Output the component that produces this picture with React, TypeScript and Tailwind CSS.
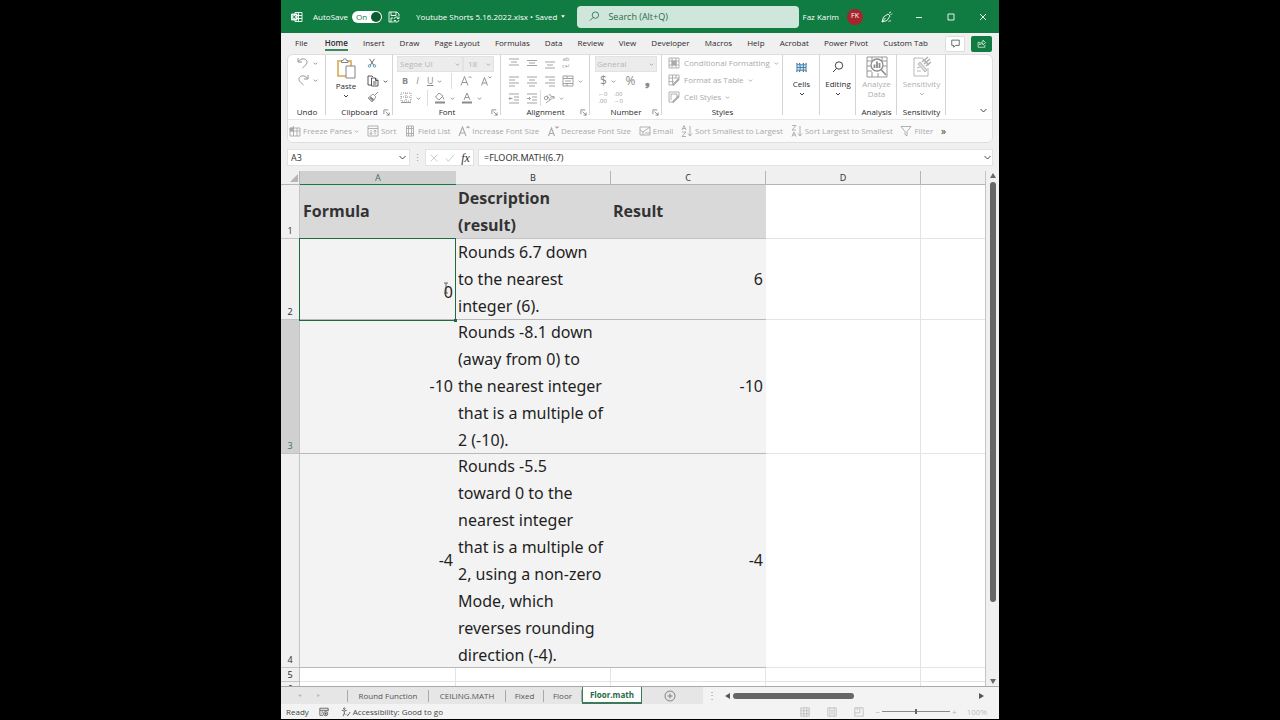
// src/App.tsx
import type { ReactNode } from "react";

const menuTabs = [
  "Home",
  "Insert",
  "Draw",
  "Page Layout",
  "Formulas",
  "Data",
  "Review",
  "View",
  "Developer",
  "Macros",
  "Help",
  "Acrobat",
  "Power Pivot",
  "Custom Tab",
];

// The line breaks are the ones the column width gives in the sheet
const rows = [
  {
    id: 2,
    height: "h-[80px]",
    a: "0",
    b: "Rounds 6.7 down\nto the nearest\ninteger (6).",
    c: "6",
  },
  {
    id: 3,
    height: "h-[133px]",
    a: "-10",
    b: "Rounds -8.1 down\n(away from 0) to\nthe nearest integer\nthat is a multiple of\n2 (-10).",
    c: "-10",
  },
  {
    id: 4,
    height: "h-[213px]",
    a: "-4",
    b: "Rounds -5.5\ntoward 0 to the\nnearest integer\nthat is a multiple of\n2, using a non-zero\nMode, which\nreverses rounding\ndirection (-4).",
    c: "-4",
  },
];

const sheets = [
  { name: "Round Function", width: "w-[81px]" },
  { name: "CEILING.MATH", width: "w-[77px]" },
  { name: "Fixed", width: "w-[38px]" },
  { name: "Floor", width: "w-[38px]" },
];

type IconProps = { children: ReactNode; className?: string; box?: string };

function Icon({ children, className = "size-3", box = "0 0 12 12" }: IconProps) {
  return (
    <svg
      viewBox={box}
      className={`shrink-0 ${className}`}
      fill="none"
      stroke="currentColor"
      strokeWidth="0.9"
      aria-hidden="true"
    >
      {children}
    </svg>
  );
}

function Chevron({ className = "size-[5px]" }: { className?: string }) {
  return (
    <Icon box="0 0 6 6" className={className}>
      <path d="M1 2l2 2 2-2" vectorEffect="non-scaling-stroke" />
    </Icon>
  );
}

function Lines({ rows }: { rows: string }) {
  return (
    <Icon>
      <path d={rows} />
    </Icon>
  );
}

function Tool({
  label,
  children,
  className = "",
}: {
  label: string;
  children: ReactNode;
  className?: string;
}) {
  return (
    <button
      type="button"
      aria-label={label}
      className={`flex h-4 items-center justify-center gap-1 ${className}`}
    >
      {children}
    </button>
  );
}

function Group({
  label,
  width,
  launcher = false,
  children,
}: {
  label: string;
  width: string;
  launcher?: boolean;
  children: ReactNode;
}) {
  return (
    <section
      aria-label={label}
      className={`relative flex shrink-0 flex-col ${width} after:absolute after:top-0 after:right-0 after:h-[60px] after:w-px after:bg-[#d4d4d4]`}
    >
      <div className="flex h-[52px] flex-col text-[#a9a9a9]">{children}</div>
      <p className="text-center leading-[10px] text-[#2b2b2b]">{label}</p>
      {launcher && (
        <button
          type="button"
          aria-label={`${label} settings`}
          className="absolute right-[3px] bottom-[1px] text-[#777]"
        >
          <Icon box="0 0 8 8" className="size-[7px]">
            <path d="M1 6V1h5M3 3l4 4M7 4v3H4" />
          </Icon>
        </button>
      )}
    </section>
  );
}

function BigTool({
  label,
  icon,
  muted = false,
  arrow = true,
}: {
  label: string;
  icon: ReactNode;
  muted?: boolean;
  arrow?: boolean;
}) {
  return (
    <button
      type="button"
      className={`flex flex-col items-center leading-[10px] ${muted ? "text-[#b0b0b0]" : "text-[#2b2b2b]"}`}
    >
      <span className="flex h-6 items-center">{icon}</span>
      <span>{label}</span>
      {arrow && <Chevron className="mt-[2px] size-[6px]" />}
    </button>
  );
}

function QuickTool({ label, children }: { label: string; children: ReactNode }) {
  return (
    <button type="button" className="flex items-center gap-[2px] whitespace-nowrap">
      {children}
      {label}
    </button>
  );
}

function TitleBar() {
  return (
    <header className="flex h-[33px] shrink-0 items-center bg-[#107c41] text-[8px] text-white">
      <Icon className="ml-[10px] size-3">
        <path d="M4 1.5h7v9H4zM7.5 1.5v9M4 4.5h7M4 7.5h7" />
        <path d="M0.5 3h5.500v6h-5.500z" fill="#dff0e6" />
        <path d="M2 4.500l2.500 3M4.500 4.500L2 7.500" stroke="#107c41" />
      </Icon>
      <label htmlFor="autosave" className="ml-[10px]">
        AutoSave
      </label>
      <span className="relative ml-1 flex h-3 w-[30px] shrink-0 items-center rounded-full bg-white text-[#107c41]">
        <input
          id="autosave"
          type="checkbox"
          defaultChecked
          className="absolute inset-0 appearance-none"
        />
        <span className="ml-1">On</span>
        <span className="mr-[1px] ml-auto size-[10px] rounded-full bg-[#0d5c31]" />
      </span>
      <Icon className="ml-[6px] size-3">
        <path d="M5 11H1V1h8l2 2v2M3 1v3.500h5V1M3 11V7h2" />
        <path d="M6 8a2.500 2.500 0 0 1 4.500-1M11 5.500V7.500H9M11 9a2.500 2.500 0 0 1-4.500 1M6 11.500V9.500h2" />
      </Icon>
      <button type="button" className="ml-4 flex items-center gap-1 whitespace-nowrap">
        Youtube Shorts 5.16.2022.xlsx • Saved
        <svg viewBox="0 0 6 4" className="h-[3px] w-1" aria-hidden="true">
          <path d="M0 0h6L3 4z" fill="currentColor" />
        </svg>
      </button>
      <label className="ml-3 flex h-[22px] w-[222px] shrink-0 items-center rounded-sm bg-[#cfe7da] pl-3 text-[9px] text-[#2d6a4a]">
        <Icon className="size-[11px]">
          <circle cx="7" cy="4.500" r="3.500" />
          <path d="M4.500 7L1 10.500" />
        </Icon>
        <input
          aria-label="Search"
          placeholder="Search (Alt+Q)"
          className="ml-2 w-full bg-transparent placeholder:text-[#2d6a4a]"
        />
      </label>
      <span className="ml-auto whitespace-nowrap">Faz Karim</span>
      <span className="ml-2 flex size-4 shrink-0 items-center justify-center rounded-full bg-[#a4262c] text-[7px]">
        FK
      </span>
      <button type="button" aria-label="Pen" className="ml-[18px]">
        <Icon>
          <path d="M1 11l1.500-5L7 3l2 2-3 4.500zM1 11l3.500-4M8 2l2-1M9.500 4L11 2.500M7.500 10.500c1-1 1.500 0 2.500-1" />
        </Icon>
      </button>
      <button type="button" aria-label="Minimize" className="ml-[22px]">
        <Icon className="size-2" box="0 0 8 8">
          <path d="M1 4.500h6" />
        </Icon>
      </button>
      <button type="button" aria-label="Maximize" className="ml-6">
        <Icon className="size-2" box="0 0 8 8">
          <path d="M1 1h6v6H1z" />
        </Icon>
      </button>
      <button type="button" aria-label="Close" className="mr-3 ml-6">
        <Icon className="size-2" box="0 0 8 8">
          <path d="M1 1l6 6M7 1L1 7" />
        </Icon>
      </button>
    </header>
  );
}

function MenuBar() {
  return (
    <nav className="flex h-[21px] shrink-0 items-center pr-[7px] pl-[14px] text-[8px] text-[#2b2b2b]">
      <a href="#file" className="border-b-2 border-transparent">
        File
      </a>
      <div className="ml-[17px] flex flex-1 justify-between">
        {menuTabs.map((tab) => (
          <a
            key={tab}
            href={`#${tab}`}
            className={
              tab === "Home"
                ? "border-b-2 border-[#3d8561] font-semibold whitespace-nowrap"
                : "border-b-2 border-transparent whitespace-nowrap"
            }
          >
            {tab}
          </a>
        ))}
      </div>
      <button
        type="button"
        aria-label="Comments"
        className="ml-[17px] flex h-4 w-5 items-center justify-center rounded-xs border border-[#ddd] bg-white"
      >
        <Icon className="size-[9px]">
          <path d="M1 1.500h10v7H6L3.500 11V8.500H1z" />
        </Icon>
      </button>
      <button
        type="button"
        aria-label="Share"
        className="ml-[6px] flex h-4 w-[21px] items-center justify-center rounded-xs bg-[#107c41] text-white"
      >
        <Icon className="size-[9px]">
          <path d="M4 4.500H1.500V11h9V8M3.500 8c.5-3 2-4 4.500-4V1.500L11.500 5 8 8V6C6 6 4.500 6.500 3.500 8z" />
        </Icon>
      </button>
    </nav>
  );
}

function Ribbon() {
  return (
    <div className="mr-[6px] ml-[6px] shrink-0 overflow-hidden rounded-md border border-[#dedede] bg-white text-[8px]">
      <div className="flex h-[64px] items-start">
        <Group label="Undo" width="w-[38px]">
          <Tool label="Undo" className="text-[#888]">
            <Icon>
              <path d="M1 1v4h4M1.500 4.500C4 1 9 1 10 4.500 10.500 7 8 8.500 5.500 11" />
            </Icon>
            <Chevron />
          </Tool>
          <Tool label="Redo" className="mt-[1px] text-[#888]">
            <Icon>
              <path d="M11 1v4H7M10.500 4.500C8 1 3 1 2 4.500 1.500 7 4 8.500 6.500 11" />
            </Icon>
            <Chevron />
          </Tool>
        </Group>

        <Group label="Clipboard" width="w-[67px]" launcher>
          <div className="flex">
            <button
              type="button"
              className="flex w-10 flex-col items-center leading-[10px] text-[#2b2b2b]"
            >
              <Icon box="0 0 20 22" className="mt-[2px] h-[22px] w-5">
                <path d="M2 4h13v15H2z" stroke="#d9a84e" strokeWidth="1.600" />
                <path
                  d="M5.500 5.500V3.500h1.500a1.600 1.600 0 0 1 3.500 0H12v2z"
                  fill="#fff"
                  stroke="#777"
                />
                <path d="M10 9h9v12h-9z" fill="#fff" stroke="#777" />
              </Icon>
              <span className="mt-[2px]">Paste</span>
              <Chevron className="mt-[2px] size-[6px]" />
            </button>
            <div className="flex flex-col items-start pl-[1px] text-[#444]">
              <Tool label="Cut">
                <Icon className="size-[10px]">
                  <path d="M3 1l5 7.500M9 1L4 8.500" />
                  <circle cx="3" cy="9.500" r="1.500" stroke="#2f7f9f" />
                  <circle cx="9" cy="9.500" r="1.500" stroke="#2f7f9f" />
                </Icon>
              </Tool>
              <Tool label="Copy" className="mt-[2px]">
                <Icon>
                  <path d="M4 10H1V1h4l1 1M4.500 3h4L11 5.500V11H4.500zM8.500 3v2.500H11M6 7h3.500M6 9h3.500" />
                </Icon>
                <Chevron />
              </Tool>
              <Tool label="Format Painter" className="text-[#8c8c8c]">
                <Icon>
                  <path d="M11 1L8 4M6 3l3 3-4 5-4-4zM3 5.500L7.500 9" />
                  <path d="M2.500 7l3 3 1-1.500L4 6z" fill="currentColor" />
                </Icon>
              </Tool>
            </div>
          </div>
        </Group>

        <Group label="Font" width="w-[108px]" launcher>
          <div className="mx-1 mt-[1px] flex h-4">
            <label className="relative flex w-[66px] items-center border border-[#e2e2e2] bg-[#ececec]">
              <select
                aria-label="Font name"
                className="w-full appearance-none pl-[2px] text-[#b5b5b5]"
              >
                <option>Segoe UI</option>
              </select>
              <span className="absolute right-[2px]">
                <Chevron />
              </span>
            </label>
            <label className="relative flex w-[31px] items-center border border-[#e2e2e2] bg-[#ececec]">
              <select
                aria-label="Font size"
                className="w-full appearance-none pl-1 text-[#b5b5b5]"
              >
                <option>18</option>
              </select>
              <span className="absolute right-[2px]">
                <Chevron />
              </span>
            </label>
          </div>
          <div className="mt-[1px] flex items-center justify-between px-[9px] text-[9px] text-[#8a8a8a]">
            <Tool label="Bold" className="font-bold">
              B
            </Tool>
            <Tool label="Italic" className="italic">
              I
            </Tool>
            <Tool label="Underline">
              <span className="underline">U</span>
              <Chevron />
            </Tool>
            <span className="h-4 w-px bg-[#ddd]" />
            <Tool label="Increase font size">
              <Icon>
                <path d="M1 10.500l3.500-9L8 10.500M2.200 7.500h4.600M8.500 3L10 1.500 11.500 3" />
              </Icon>
            </Tool>
            <Tool label="Decrease font size">
              <Icon>
                <path d="M1.500 10.500l3-8 3 8M2.500 8h4M8.500 1.500L10 3l1.500-1.500" />
              </Icon>
            </Tool>
          </div>
          <div className="mt-[1px] flex items-center gap-[6px] pl-[7px] text-[#8a8a8a]">
            <Tool label="Borders">
              <Icon>
                <path d="M1 10.500h10" />
                <path d="M1 1h10v8H1zM6 1v8M1 5h10" strokeDasharray="1 1" />
              </Icon>
              <Chevron />
            </Tool>
            <span className="h-4 w-px bg-[#ddd]" />
            <Tool label="Fill color">
              <Icon>
                <path d="M5 1L1.500 5 5 8l4-4zM9 5l1 2.500" />
                <path d="M1 10.500h10" strokeWidth="2" />
              </Icon>
              <Chevron />
            </Tool>
            <Tool label="Font color">
              <Icon>
                <path d="M3 8l3-7 3 7M4 5.500h4" />
                <path d="M1 10.500h10" strokeWidth="2" />
              </Icon>
              <Chevron />
            </Tool>
          </div>
        </Group>

        <Group label="Alignment" width="w-[89px]" launcher>
          <div className="flex gap-[6px] pl-[7px] text-[#999]">
            <Tool label="Top align">
              <Lines rows="M1 2h10M3 5h6M1 8h10" />
            </Tool>
            <Tool label="Middle align">
              <Lines rows="M1 3.500h10M3 6h6M1 8.500h10" />
            </Tool>
            <Tool label="Bottom align">
              <Lines rows="M1 5h10M3 8h6M1 11h10" />
            </Tool>
            <Tool label="Wrap text">
              <span className="text-[6px] leading-[7px]">
                ab
                <br />
                c↵
              </span>
            </Tool>
          </div>
          <div className="mt-[2px] flex gap-[6px] pl-[7px] text-[#999]">
            <Tool label="Align left">
              <Lines rows="M1 2h10M1 5h6M1 8h10M1 11h6" />
            </Tool>
            <Tool label="Center">
              <Lines rows="M1 2h10M3 5h6M1 8h10M3 11h6" />
            </Tool>
            <Tool label="Align right">
              <Lines rows="M1 2h10M5 5h6M1 8h10M5 11h6" />
            </Tool>
            <Tool label="Merge and center">
              <Icon>
                <path d="M1 1h10v10H1zM1 3.500h10M1 8.500h10M5 1v2.500M5 8.500V11M3 6h6" />
              </Icon>
              <Chevron />
            </Tool>
          </div>
          <div className="mt-[1px] flex gap-[6px] pl-[7px] text-[#999]">
            <Tool label="Decrease indent">
              <Lines rows="M1 2h10M6 5h5M6 8h5M1 11h10M4.500 6.500H1M2.500 5L1 6.500 2.500 8" />
            </Tool>
            <Tool label="Increase indent">
              <Lines rows="M1 2h10M6 5h5M6 8h5M1 11h10M1 6.500h3.500M3 5l1.500 1.500L3 8" />
            </Tool>
            <span className="-mx-1 h-4 w-px bg-[#ddd]" />
            <Tool label="Orientation">
              <Icon>
                <circle cx="3" cy="6" r="1.700" />
                <path d="M4 3.500L7 8M5.500 3a1.800 1.800 0 0 1 2 3M3 11l8-6M8.500 4.500H11V7" />
              </Icon>
              <Chevron />
            </Tool>
          </div>
        </Group>

        <Group label="Number" width="w-[72px]" launcher>
          <label className="relative mx-[5px] mt-[1px] flex h-4 items-center border border-[#e2e2e2] bg-[#ececec]">
            <select
              aria-label="Number format"
              className="w-full appearance-none pl-[1px] text-[#b5b5b5]"
            >
              <option>General</option>
            </select>
            <span className="absolute right-[2px]">
              <Chevron />
            </span>
          </label>
          <div className="mt-[1px] flex justify-between pr-3 pl-[10px] text-xs text-[#8a8a8a]">
            <Tool label="Currency">
              $<Chevron />
            </Tool>
            <Tool label="Percent">%</Tool>
            <Tool label="Comma" className="font-bold">
              ❟
            </Tool>
          </div>
          <div className="mt-[1px] flex gap-[6px] pl-2 text-[6px] leading-[7px] text-[#999]">
            <Tool label="Increase decimal">
              <span>
                ←0
                <br />
                .00
              </span>
            </Tool>
            <Tool label="Decrease decimal">
              <span>
                .00
                <br />
                →0
              </span>
            </Tool>
          </div>
        </Group>

        <Group label="Styles" width="w-[121px]">
          <div className="flex flex-col items-start gap-[1px] pl-[6px] whitespace-nowrap">
            <Tool label="Conditional Formatting">
              <Icon>
                <path d="M1 1h10v10H1zM1 4h10M1 8h10M4 1v10M8 1v10" />
                <path d="M4 4h4v4H4z" fill="currentColor" />
              </Icon>
              Conditional Formatting
              <Chevron />
            </Tool>
            <Tool label="Format as Table">
              <Icon>
                <path d="M11 5V1H1v10h3M1 4h10M1 7.500h5M4.500 1v9M8 1v3" />
                <path d="M11 5L6 10l-1.500 1.500" strokeWidth="2" />
              </Icon>
              Format as Table
              <Chevron />
            </Tool>
            <Tool label="Cell Styles">
              <Icon>
                <path d="M11 5V1H1v10h3M3 3h6v3M3 3v6" />
                <path d="M11 5L6 10l-1.500 1.500" strokeWidth="2" />
              </Icon>
              Cell Styles
              <Chevron />
            </Tool>
          </div>
        </Group>

        <Group label="" width="w-[37px]">
          <BigTool
            label="Cells"
            icon={
              <Icon className="size-[11px]">
                <path d="M1 1v2M4 1v2M8 1v2M11 1v2M1 9v2M4 9v2M8 9v2M11 9v2" />
                <path d="M1 3h10v6H1zM1 6h10M4.500 3v6M8 3v6" stroke="#2e75a8" fill="#cfe3f2" />
              </Icon>
            }
          />
        </Group>
        <Group label="" width="w-[36px]">
          <BigTool
            label="Editing"
            icon={
              <Icon>
                <circle cx="7" cy="4.500" r="3.700" />
                <path d="M4.500 7.500L1 11" />
              </Icon>
            }
          />
        </Group>
        <Group label="Analysis" width="w-[41px]">
          <BigTool
            muted
            arrow={false}
            label="Analyze Data"
            icon={
              <Icon box="0 0 22 22" className="size-[22px] text-[#8c8c8c]">
                <path d="M1 1h20v20H1zM1 5h5M1 10h4M1 15h5M16 5h5M17 10h4M6 1v4M16 1v4M6 16v5M12 17v4" />
                <circle cx="11" cy="9" r="6" fill="#fff" strokeWidth="1.300" />
                <path d="M15 13.500l5 5.500" strokeWidth="1.600" />
                <path d="M8.500 12V8.500M11 12V5.500M13.500 12V7" strokeWidth="1.800" />
              </Icon>
            }
          />
        </Group>
        <Group label="Sensitivity" width="w-[49px]">
          <BigTool
            muted
            label="Sensitivity"
            icon={
              <Icon box="0 0 22 22" className="size-[22px]">
                <path d="M12 2H3v18h14V12" />
                <path d="M7 8l7 8 2-2-7-8zM6 12l3-1M6 15h4" fill="#ddd" />
                <path d="M11 6l6-5M13 8l6-5M15 10l5-4M12 3l6 6" strokeWidth="1.600" />
              </Icon>
            }
          />
        </Group>
        <button
          type="button"
          aria-label="Collapse ribbon"
          className="mt-auto mr-1 mb-1 ml-auto text-[#333]"
        >
          <Chevron className="size-[9px]" />
        </button>
      </div>

      <div className="flex h-[23px] items-center justify-between border-t border-[#e6e6e6] bg-[#fafafa] pr-[46px] pl-[1px] text-[#a9a9a9]">
        <button type="button" className="flex items-center gap-[2px] whitespace-nowrap">
          <Icon>
            <path d="M1 3h10v8H1zM1 6h10M4.500 1v10M8 3v8" />
            <path d="M1 3h3.500v3H1z" fill="currentColor" />
          </Icon>
          Freeze Panes
          <Chevron />
        </button>
        <QuickTool label="Sort">
          <Icon>
            <path d="M1 1h10v10H1zM1 3.500h10M4 5v4.500M2.500 8L4 9.500 5.500 8M8 9.500V5M6.500 6.500L8 5l1.500 1.500" />
          </Icon>
        </QuickTool>
        <QuickTool label="Field List">
          <Icon>
            <path d="M2.500 1h7v10h-7zM4.500 1v10M7.500 1v10M2.500 3.500h7M2.500 8.500h7" />
          </Icon>
        </QuickTool>
        <QuickTool label="Increase Font Size">
          <Icon>
            <path d="M1 11l3.500-9L8 11M2.200 8h4.600M8.500 3L10 1.500 11.500 3" strokeWidth="1.100" />
          </Icon>
        </QuickTool>
        <QuickTool label="Decrease Font Size">
          <Icon>
            <path d="M1.500 11l3-8 3 8M2.500 8.500h4M8.500 1.500L10 3l1.500-1.500" strokeWidth="1.100" />
          </Icon>
        </QuickTool>
        <QuickTool label="Email">
          <Icon>
            <path d="M1 2h10v8H1zM1 5l3 2 7-5M4 7v3M6 8h5" />
          </Icon>
        </QuickTool>
        <QuickTool label="Sort Smallest to Largest">
          <Icon>
            <path d="M1 5l2-4.500L5 5M1.500 3.500h3M1 7h4l-4 4.500h4M9 1v10M7 8.500L9 11l2-2.500" />
          </Icon>
        </QuickTool>
        <QuickTool label="Sort Largest to Smallest">
          <Icon>
            <path d="M1 .5h4L1 5h4M1 11.500L3 7l2 4.500M1.500 10h3M9 1v10M7 8.500L9 11l2-2.500" />
          </Icon>
        </QuickTool>
        <QuickTool label="Filter">
          <Icon>
            <path d="M1 1.500h10L7 6.500V11L5 9.500v-3z" />
          </Icon>
        </QuickTool>
        <button type="button" aria-label="More commands" className="text-[10px] text-[#333]">
          »
        </button>
      </div>
    </div>
  );
}

function FormulaBar() {
  return (
    <div className="mx-[6px] mt-[6px] flex h-[17px] shrink-0 items-center text-[9px] text-[#333]">
      <div className="flex h-full w-[123px] items-center border border-[#e2e2e2] bg-white pr-[2px]">
        <input
          aria-label="Name box"
          defaultValue="A3"
          className="min-w-0 flex-1 bg-transparent pl-[3px]"
        />
        <button type="button" aria-label="Open name list">
          <Chevron className="size-[9px]" />
        </button>
      </div>
      <span className="w-[15px] text-center text-[#999]">⋮</span>
      <div className="flex h-full w-[49px] items-center justify-around border border-[#e2e2e2] bg-white">
        <button type="button" aria-label="Cancel" className="text-[#bbb]">
          <Icon className="size-[10px]">
            <path d="M2 2l8 8M10 2l-8 8" />
          </Icon>
        </button>
        <button type="button" aria-label="Enter" className="text-[#bbb]">
          <Icon className="size-[10px]">
            <path d="M1 6.500L4 10l7-8" />
          </Icon>
        </button>
        <button
          type="button"
          aria-label="Insert function"
          className="font-['Liberation_Serif',serif] text-xs leading-none italic"
        >
          fx
        </button>
      </div>
      <div className="ml-1 flex h-full flex-1 items-center border border-[#e2e2e2] bg-white">
        <input
          aria-label="Formula"
          defaultValue="=FLOOR.MATH(6.7)"
          className="min-w-0 flex-1 bg-transparent pl-[5px] font-['Noto_Sans',sans-serif]"
        />
        <button type="button" aria-label="Expand formula bar">
          <Chevron className="size-[9px]" />
        </button>
      </div>
    </div>
  );
}

function Grid() {
  return (
    <div className="mt-[5px] flex min-h-0 flex-1">
      <div className="min-w-0 flex-1 overflow-hidden border-r border-[#c4c4c4]">
        <table className="w-full table-fixed border-separate border-spacing-0 bg-white font-['Noto_Sans',sans-serif] text-base leading-[27px] text-[#1f1f1f]">
          <colgroup>
            <col className="w-[19px]" />
            <col className="w-[156px]" />
            <col className="w-[155px]" />
            <col className="w-[155px]" />
            <col className="w-[155px]" />
            <col />
          </colgroup>
          <thead>
            <tr className="h-[14px] bg-[#f0f0f0] text-[9px] leading-[13px] text-[#333]">
              <th aria-label="Select all" className="border-r border-b border-[#b5b5b5] p-0">
                <svg viewBox="0 0 8 8" className="mr-[1px] ml-auto size-2" aria-hidden="true">
                  <path d="M8 0v8H0z" fill="#b5b5b5" />
                </svg>
              </th>
              <th className="border-b border-[#107c41] bg-[#d0d0d0] p-0 font-normal text-[#3d7a5a]">
                A
              </th>
              <th className="border-r border-b border-[#b5b5b5] p-0 font-normal">B</th>
              <th className="border-r border-b border-[#b5b5b5] p-0 font-normal">C</th>
              <th className="border-r border-b border-[#b5b5b5] p-0 font-normal">D</th>
              <th className="border-b border-[#b5b5b5] p-0" />
            </tr>
          </thead>
          <tbody>
            <tr className="bg-[#d9d9d9] text-left font-['Open_Sans',sans-serif] text-[#333]">
              <th className="border-r border-b border-[#c4c4c4] bg-[#f0f0f0] p-0 text-center align-bottom text-[9px] leading-[14px] font-normal">
                1
              </th>
              <td className="border-b border-[#c4c4c4] p-0 pl-[3px] font-bold">Formula</td>
              <td className="border-b border-[#c4c4c4] p-0 pl-[2px] font-bold">
                <div className="flex h-[53px] items-center">Description (result)</div>
              </td>
              <td className="border-b border-[#c4c4c4] p-0 pl-[2px] font-bold">Result</td>
              <td className="border-r border-b border-[#e4e4e4] bg-white" />
              <td className="border-b border-[#e4e4e4] bg-white" />
            </tr>
            {rows.map((row) => (
              <tr key={row.id} className="bg-[#f3f3f3]">
                <th
                  className={`border-r border-b border-[#c4c4c4] p-0 text-center align-bottom text-[9px] leading-[14px] font-normal ${
                    row.id === 3 ? "bg-[#d0d0d0] text-[#3d7a5a]" : "bg-[#f0f0f0] text-[#333]"
                  }`}
                >
                  {row.id}
                </th>
                <td
                  className={`relative border-b border-[#b9b9b9] p-0 pr-[3px] text-right ${row.id === 2 ? "pt-[27px]" : ""}`}
                >
                  {row.a}
                  {row.id === 2 && (
                    <>
                      <span className="absolute -top-px right-0 -bottom-[2px] -left-px z-10 border border-[#1e6b41]" />
                      <span className="absolute -right-px -bottom-[3px] z-10 size-[3px] bg-[#1e6b41]" />
                      <Icon
                        box="0 0 6 12"
                        className="absolute right-[7px] bottom-[25px] h-3 w-[6px] text-[#555]"
                      >
                        <path d="M1 1h4M3 1v10M1 11h4" />
                      </Icon>
                    </>
                  )}
                </td>
                <td className="border-b border-[#b9b9b9] p-0 pl-[2px]">
                  <div className={`flex items-center whitespace-pre ${row.height}`}>{row.b}</div>
                </td>
                <td className="border-b border-[#b9b9b9] p-0 pr-[3px] text-right">{row.c}</td>
                <td className="border-r border-b border-[#e4e4e4] bg-white" />
                <td className="border-b border-[#e4e4e4] bg-white" />
              </tr>
            ))}
            {[5, 6].map((id) => (
              <tr key={id} className="h-[14px]">
                <th className="border-r border-b border-[#c4c4c4] bg-[#f0f0f0] p-0 text-[9px] leading-[13px] font-normal text-[#333]">
                  {id}
                </th>
                <td className="border-r border-b border-[#e4e4e4] p-0" />
                <td className="border-r border-b border-[#e4e4e4] p-0" />
                <td className="border-r border-b border-[#e4e4e4] p-0" />
                <td className="border-r border-b border-[#e4e4e4] p-0" />
                <td className="border-b border-[#e4e4e4] p-0" />
              </tr>
            ))}
          </tbody>
        </table>
      </div>
      <div className="flex w-[13px] flex-col items-center py-[2px] text-[#666]">
        <svg viewBox="0 0 6 5" className="h-[5px] w-[6px]" aria-hidden="true">
          <path d="M3 0l3 5H0z" fill="currentColor" />
        </svg>
        <div className="mt-1 h-[420px] w-[6px] rounded-full bg-[#666]" />
        <svg viewBox="0 0 6 5" className="mt-auto h-[5px] w-[6px]" aria-hidden="true">
          <path d="M3 5l3-5H0z" fill="currentColor" />
        </svg>
      </div>
    </div>
  );
}

function SheetTabs() {
  return (
    <div className="flex h-[18px] shrink-0 items-center border-t border-[#a8a8a8] bg-[#f3f3f3] text-[8px] text-[#555]">
      <div className="flex h-full w-[422px] items-center bg-[#e6e6e6]">
        <div className="flex h-3 w-[67px] items-center gap-4 border-r border-[#aaa] pl-[17px] text-[6px] text-[#bbb]">
          <span>◂</span>
          <span>▸</span>
        </div>
        {sheets.map((sheet) => (
          <button
            key={sheet.name}
            type="button"
            className={`h-3 border-r border-[#aaa] leading-[11px] whitespace-nowrap ${sheet.width}`}
          >
            {sheet.name}
          </button>
        ))}
        <button
          type="button"
          className="h-full w-[60px] border-x border-b-2 border-[#3d7a5a] bg-white font-bold text-[#1e6b41]"
        >
          Floor.math
        </button>
        <button type="button" aria-label="New sheet" className="ml-[22px] text-[#777]">
          <Icon>
            <circle cx="6" cy="6" r="5" />
            <path d="M6 3.500v5M3.500 6h5" />
          </Icon>
        </button>
      </div>
      <span className="w-[18px] text-center text-[10px] text-[#999]">⋮</span>
      <div className="mr-[15px] flex flex-1 items-center pl-1 text-[#555]">
        <svg viewBox="0 0 5 6" className="h-[6px] w-[5px]" aria-hidden="true">
          <path d="M0 3l5-3v6z" fill="currentColor" />
        </svg>
        <div className="ml-[3px] h-[6px] w-[121px] rounded-full bg-[#666]" />
        <svg viewBox="0 0 5 6" className="ml-auto h-[6px] w-[5px]" aria-hidden="true">
          <path d="M5 3L0 0v6z" fill="currentColor" />
        </svg>
      </div>
    </div>
  );
}

function StatusBar() {
  return (
    <footer className="flex h-[15px] shrink-0 items-center bg-[#f3f3f3] px-[5px] text-[8px] text-[#444]">
      <span>Ready</span>
      <Icon className="ml-[10px] size-[10px]">
        <path d="M5 10H1V1.500h10V5M1 4h10M3 6h2M3 8h1" />
        <circle cx="8" cy="8" r="2.500" />
        <circle cx="8" cy="8" r=".8" fill="currentColor" />
      </Icon>
      <Icon className="ml-3 size-[10px]">
        <circle cx="4" cy="2" r="1" />
        <path d="M1 4l3 .8L7 4M4 5v2.500L2.500 11M4 7.500L5 9M6.500 9L8 10.500 11 6" />
      </Icon>
      <span className="ml-[2px]">Accessibility: Good to go</span>
      <div className="ml-auto flex items-center gap-[17px] text-[#b5b5b5]">
        <button type="button" aria-label="Normal view">
          <Icon className="size-[10px]">
            <path d="M1 1h10v10H1zM1 4.500h10M1 8h10M4.500 1v10M8 1v10" />
          </Icon>
        </button>
        <button type="button" aria-label="Page layout view">
          <Icon className="size-[10px]">
            <path d="M1 1h10v10H1zM3.500 1v10M8.500 1v10M5 4h2M5 6h2M5 8h2" />
          </Icon>
        </button>
        <button type="button" aria-label="Page break view">
          <Icon className="size-[10px]">
            <path d="M1 1h10v10H1zM1 7h6V1M4 1v3" />
          </Icon>
        </button>
      </div>
      <span className="ml-3 text-[#b5b5b5]">−</span>
      <input
        type="range"
        aria-label="Zoom"
        className="mx-[2px] h-px w-[68px] appearance-none bg-[#8a8a8a] [&::-webkit-slider-thumb]:h-[5px] [&::-webkit-slider-thumb]:w-[2px] [&::-webkit-slider-thumb]:appearance-none [&::-webkit-slider-thumb]:bg-[#666]"
      />
      <span className="text-[#b5b5b5]">+</span>
      <span className="mr-[7px] ml-[10px] text-[#c0c0c0]">100%</span>
    </footer>
  );
}

export default function App() {
  return (
    <main className="h-screen bg-black pb-px font-['Open_Sans','Noto_Sans',sans-serif]">
      <div className="mx-auto flex h-full w-full max-w-[718px] flex-col overflow-hidden bg-[#f0f0f0]">
        <TitleBar />
        <MenuBar />
        <Ribbon />
        <FormulaBar />
        <Grid />
        <SheetTabs />
        <StatusBar />
      </div>
    </main>
  );
}
